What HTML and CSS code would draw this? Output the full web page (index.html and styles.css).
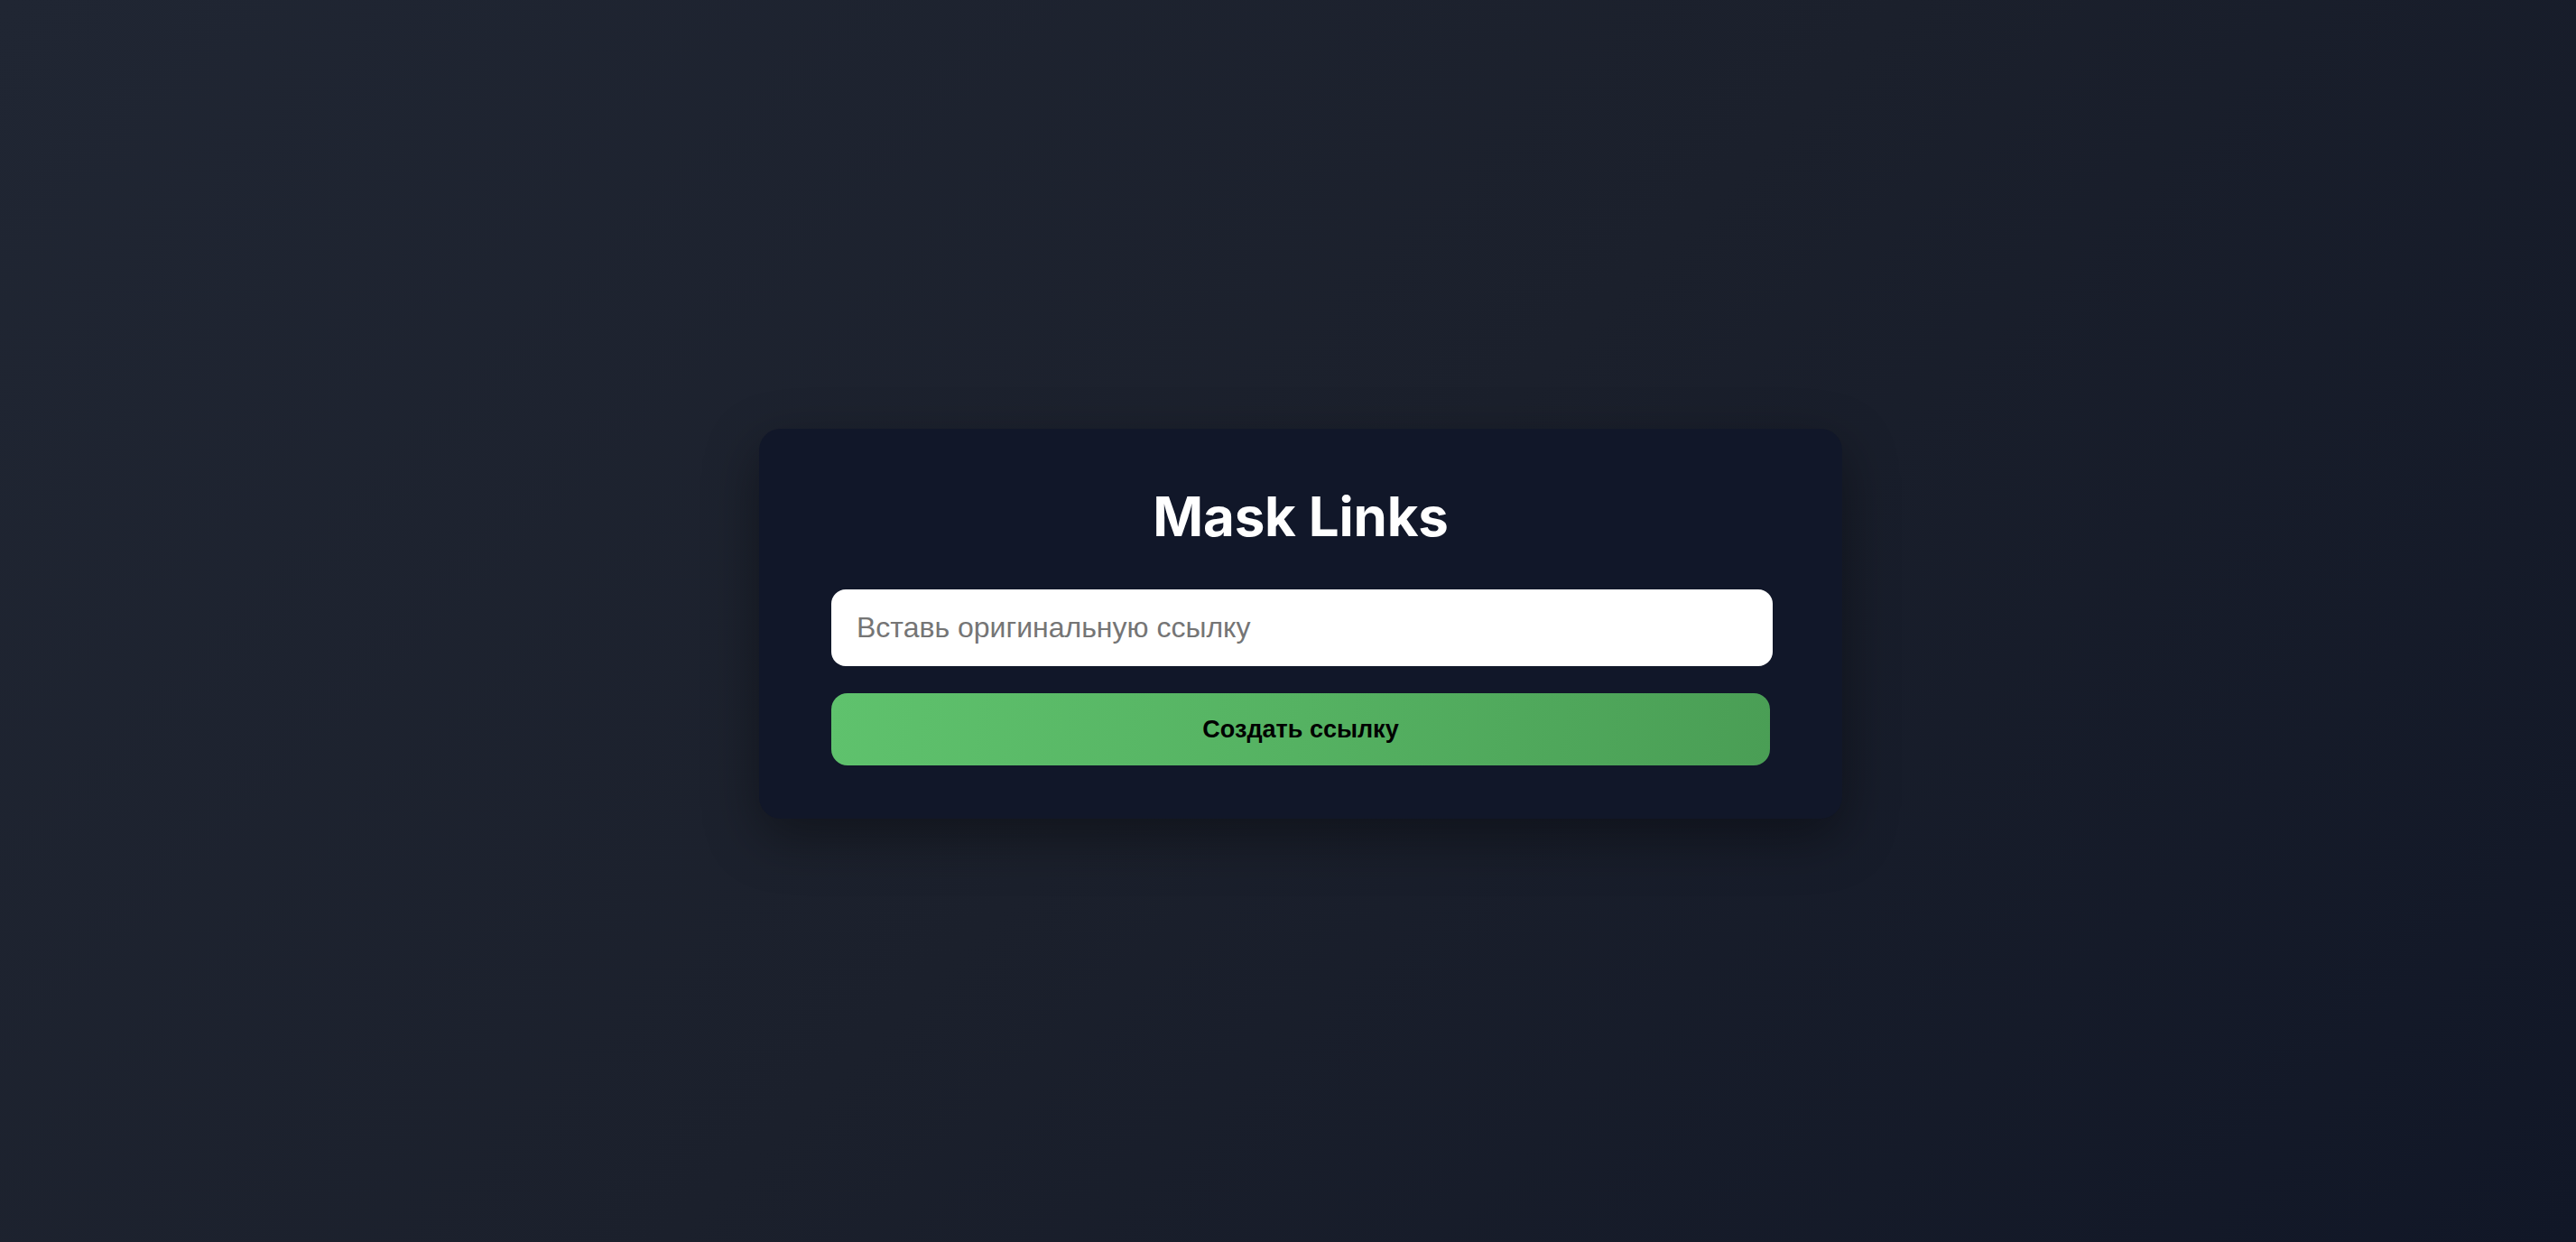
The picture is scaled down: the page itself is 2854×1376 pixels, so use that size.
FILE: index.html
```html
<!DOCTYPE html>
<html lang="ru">
<head>
<meta charset="utf-8">
<title>Mask Links</title>
<link rel="stylesheet" href="styles.css">
</head>
<body>
<main class="card">
  <h1 class="title">Mask Links</h1>
  <form class="form">
    <input class="url-input" type="text" placeholder="Вставь оригинальную ссылку">
    <button class="submit" type="button">Создать ссылку</button>
  </form>
</main>
</body>
</html>
```

FILE: styles.css
```css
html, body {
  margin: 0;
  height: 100%;
}
body {
  background: linear-gradient(135deg, #202633 0%, #1b202c 50%, #111727 100%);
  display: flex;
  align-items: center;
  justify-content: center;
  padding-left: 28px;
  padding-top: 6px;
  box-sizing: border-box;
  font-family: "Liberation Sans", Arial, sans-serif;
}
.card {
  width: 1200px;
  box-sizing: border-box;
  padding: 61px 80px 59px;
  background: #111729;
  border-radius: 24px;
  box-shadow: 0 20px 60px rgba(0, 0, 0, 0.38);
}
.title {
  margin: 0 0 44px;
  text-align: center;
  font-family: Inter, "Noto Sans", sans-serif;
  font-weight: 700;
  font-size: 60px;
  line-height: 73px;
  color: #ffffff;
  letter-spacing: -0.2px;
}
.form {
  display: flex;
  flex-direction: column;
  gap: 30px;
  margin: 0;
}
.url-input {
  width: calc(100% + 3px);
  height: 85px;
  box-sizing: border-box;
  border: none;
  border-radius: 16px;
  background: #ffffff;
  padding: 0 28px;
  font-family: "Liberation Sans", Arial, sans-serif;
  font-size: 32px;
  color: #222;
  outline: none;
}
.url-input::placeholder {
  color: #757575;
}
.submit {
  width: 100%;
  height: 80px;
  border: none;
  border-radius: 18px;
  background: linear-gradient(100deg, #5fc26d 0%, #55b262 50%, #4a9e55 100%);
  font-family: "Liberation Sans", Arial, sans-serif;
  font-weight: 700;
  font-size: 27px;
  color: #000;
  cursor: pointer;
  padding: 0;
}
```
